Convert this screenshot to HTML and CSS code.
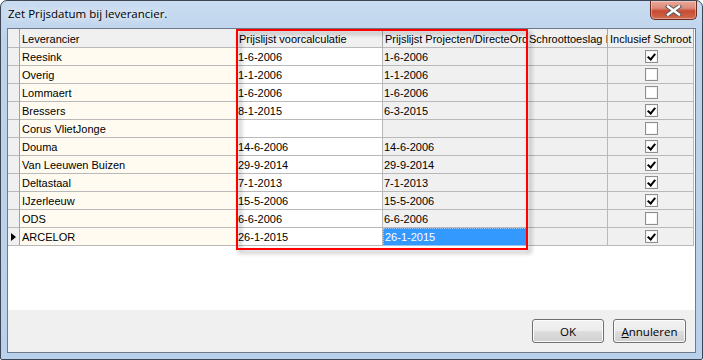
FILE: index.html
```html
<!DOCTYPE html>
<html lang="nl">
<head>
    <meta charset="UTF-8" />
    <meta name="viewport" content="width=device-width, initial-scale=1.0" />
    <title>Zet Prijsdatum bij leverancier.</title>
    <link rel="stylesheet" href="styles.css">
</head>
<body>
    <!-- DIALOG WINDOW -->
    <div class="window">
        <div class="titlebar">
            <div class="title-text">Zet Prijsdatum bij leverancier.</div>
            <div class="close-btn">
                <svg width="17" height="11" viewBox="0 0 17 11">
                    <path d="M3 1.5 L14 9.5 M14 1.5 L3 9.5" stroke="#5a5a5a" stroke-width="4.4" stroke-linecap="square"/>
                    <path d="M3 1.5 L14 9.5 M14 1.5 L3 9.5" stroke="#ffffff" stroke-width="2.4" stroke-linecap="square"/>
                </svg>
            </div>
        </div>

        <div class="client">
            <!-- GRID -->
            <div class="grid-area">
                <div class="grid-row header-row">
                    <div class="cell row-head"></div>
                    <div class="cell">Leverancier</div>
                    <div class="cell">Prijslijst voorcalculatie</div>
                    <div class="cell">Prijslijst Projecten/DirecteOrder</div>
                    <div class="cell">Schroottoeslag Import</div>
                    <div class="cell">Inclusief Schroot</div>
                </div>

                <div class="grid-row">
                    <div class="cell row-head"></div>
                    <div class="cell name">Reesink</div>
                    <div class="cell date">1-6-2006</div>
                    <div class="cell grey">1-6-2006</div>
                    <div class="cell grey"></div>
                    <div class="cell grey check-cell"><span class="checkbox checked"></span></div>
                </div>
                <div class="grid-row">
                    <div class="cell row-head"></div>
                    <div class="cell name">Overig</div>
                    <div class="cell date">1-1-2006</div>
                    <div class="cell grey">1-1-2006</div>
                    <div class="cell grey"></div>
                    <div class="cell grey check-cell"><span class="checkbox"></span></div>
                </div>
                <div class="grid-row">
                    <div class="cell row-head"></div>
                    <div class="cell name">Lommaert</div>
                    <div class="cell date">1-6-2006</div>
                    <div class="cell grey">1-6-2006</div>
                    <div class="cell grey"></div>
                    <div class="cell grey check-cell"><span class="checkbox"></span></div>
                </div>
                <div class="grid-row">
                    <div class="cell row-head"></div>
                    <div class="cell name">Bressers</div>
                    <div class="cell date">8-1-2015</div>
                    <div class="cell grey">6-3-2015</div>
                    <div class="cell grey"></div>
                    <div class="cell grey check-cell"><span class="checkbox checked"></span></div>
                </div>
                <div class="grid-row">
                    <div class="cell row-head"></div>
                    <div class="cell name">Corus VlietJonge</div>
                    <div class="cell date"></div>
                    <div class="cell grey"></div>
                    <div class="cell grey"></div>
                    <div class="cell grey check-cell"><span class="checkbox"></span></div>
                </div>
                <div class="grid-row">
                    <div class="cell row-head"></div>
                    <div class="cell name">Douma</div>
                    <div class="cell date">14-6-2006</div>
                    <div class="cell grey">14-6-2006</div>
                    <div class="cell grey"></div>
                    <div class="cell grey check-cell"><span class="checkbox checked"></span></div>
                </div>
                <div class="grid-row">
                    <div class="cell row-head"></div>
                    <div class="cell name">Van Leeuwen Buizen</div>
                    <div class="cell date">29-9-2014</div>
                    <div class="cell grey">29-9-2014</div>
                    <div class="cell grey"></div>
                    <div class="cell grey check-cell"><span class="checkbox checked"></span></div>
                </div>
                <div class="grid-row">
                    <div class="cell row-head"></div>
                    <div class="cell name">Deltastaal</div>
                    <div class="cell date">7-1-2013</div>
                    <div class="cell grey">7-1-2013</div>
                    <div class="cell grey"></div>
                    <div class="cell grey check-cell"><span class="checkbox checked"></span></div>
                </div>
                <div class="grid-row">
                    <div class="cell row-head"></div>
                    <div class="cell name">IJzerleeuw</div>
                    <div class="cell date">15-5-2006</div>
                    <div class="cell grey">15-5-2006</div>
                    <div class="cell grey"></div>
                    <div class="cell grey check-cell"><span class="checkbox checked"></span></div>
                </div>
                <div class="grid-row">
                    <div class="cell row-head"></div>
                    <div class="cell name">ODS</div>
                    <div class="cell date">6-6-2006</div>
                    <div class="cell grey">6-6-2006</div>
                    <div class="cell grey"></div>
                    <div class="cell grey check-cell"><span class="checkbox"></span></div>
                </div>
                <div class="grid-row">
                    <div class="cell row-head current"></div>
                    <div class="cell name">ARCELOR</div>
                    <div class="cell date">26-1-2015</div>
                    <div class="cell selected">26-1-2015</div>
                    <div class="cell grey"></div>
                    <div class="cell grey check-cell"><span class="checkbox checked"></span></div>
                </div>
            </div>

            <!-- BUTTON BAR -->
            <div class="button-bar">
                <div class="btn btn-ok">OK</div>
                <div class="btn btn-cancel"><u>A</u>nnuleren</div>
            </div>
        </div>

        <!-- annotation drawn over the two price columns -->
        <div class="highlight-box"></div>
    </div>
</body>
</html>
```

FILE: styles.css
```css
* {
box-sizing: border-box;
}

body {
margin: 0;
padding: 0;
background-color: #ffffff;
}

.window {
position: relative;
width: 703px;
height: 360px;
border: 1px solid #3c4654;
border-radius: 7px 7px 2px 2px;
padding: 0 6px 6px 6px;
background: linear-gradient(to bottom, #c9dcf1 0px, #bcd3ec 40px, #b9d1ea 100%);
display: flex;
flex-direction: column;
}

.titlebar {
height: 27px;
display: flex;
justify-content: space-between;
align-items: flex-start;
}

.title-text {
font-family: "Open Sans", "Liberation Sans", sans-serif;
font-size: 11.5px;
color: #000000;
padding: 5px 0 0 1px;
text-shadow: 0 0 8px #ffffff, 0 0 8px #ffffff;
}

.close-btn {
width: 47px;
height: 19px;
margin-right: -1px;
border: 1px solid #6b2a20;
border-top: none;
border-radius: 0 0 5px 5px;
background: linear-gradient(to bottom, #e9a99b 0%, #dc8a79 40%, #c74b33 55%, #cf6a4f 100%);
box-shadow: inset 0 0 0 1px rgba(255, 255, 255, 0.35);
display: flex;
align-items: center;
justify-content: center;
}

.client {
flex: 1;
border: 1px solid #6c7a8c;
background-color: #ffffff;
display: flex;
flex-direction: column;
}

.grid-area {
flex: 1;
background-color: #ffffff;
}

.grid-row {
display: grid;
grid-template-columns: 12px 217px 146px 144px 81px 86px;
height: 18px;
}

.header-row {
height: 19px;
}

.cell {
border-right: 1px solid #b9b9b9;
border-bottom: 1px solid #b9b9b9;
font-family: "Liberation Sans", Arial, sans-serif;
font-size: 11px;
color: #000000;
padding-left: 1px;
white-space: nowrap;
overflow: hidden;
display: flex;
align-items: center;
}

.header-row .cell {
background-color: #f0f0f0;
padding-left: 2px;
padding-top: 1px;
border-right-color: #a9a9a9;
}

.row-head {
background-color: #f0f0f0;
border-right-color: #a0a0a0;
}

.row-head.current::after {
content: "";
margin-left: 2px;
border-top: 4px solid transparent;
border-bottom: 4px solid transparent;
border-left: 5px solid #000000;
}

.name {
background-color: #fffbf0;
padding-left: 2px;
}

.date {
background-color: #ffffff;
}

.grey {
background-color: #f0f0f0;
}

.selected {
background-color: #3399ff;
color: #ffffff;
outline: 1px dotted #9ec8f0;
outline-offset: -1px;
padding-left: 2px;
}

.check-cell {
justify-content: center;
padding-left: 0;
}

.checkbox {
width: 13px;
height: 13px;
margin-left: 2px;
border: 1px solid #8e8f8f;
background-color: #ffffff;
box-shadow: inset 0 0 0 1px #f4f4f4;
position: relative;
}

.checkbox.checked::after {
content: "";
position: absolute;
left: 3px;
top: 1px;
width: 3px;
height: 6px;
border-right: 2px solid #000000;
border-bottom: 2px solid #000000;
transform: rotate(40deg);
}

.button-bar {
height: 42px;
background-color: #f0f0f0;
display: flex;
justify-content: flex-end;
align-items: flex-start;
gap: 9px;
padding: 9px 9px 0 0;
}

.btn {
height: 24px;
border: 1px solid #707070;
border-radius: 3px;
background: linear-gradient(to bottom, #f2f2f2 0%, #ebebeb 48%, #dddddd 52%, #cfcfcf 100%);
box-shadow: inset 0 0 0 1px #fbfbfb;
font-family: "Open Sans", "Liberation Sans", sans-serif;
font-size: 11.5px;
color: #000000;
display: flex;
align-items: center;
justify-content: center;
}

.btn-ok {
width: 72px;
}

.btn-cancel {
width: 73px;
}

.highlight-box {
position: absolute;
left: 235px;
top: 28px;
width: 292px;
height: 221px;
border: 2px solid #ff0000;
filter: drop-shadow(3px 3px 2px rgba(0, 0, 0, 0.35));
}
```
